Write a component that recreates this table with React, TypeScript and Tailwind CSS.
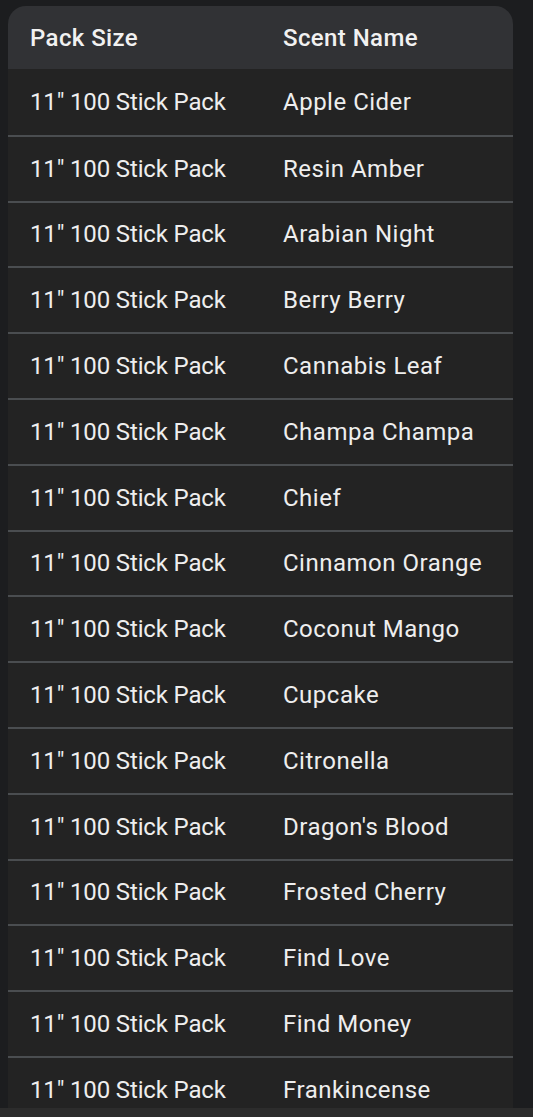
import React from "react";

const scents = [
  "Apple Cider",
  "Resin Amber",
  "Arabian Night",
  "Berry Berry",
  "Cannabis Leaf",
  "Champa Champa",
  "Chief",
  "Cinnamon Orange",
  "Coconut Mango",
  "Cupcake",
  "Citronella",
  "Dragon's Blood",
  "Frosted Cherry",
  "Find Love",
  "Find Money",
  "Frankincense",
];

export default function App() {
  return (
    <div
      className="w-[533px] h-[1117px] overflow-hidden bg-[#1c1d1f] flex flex-col"
      style={{ fontFamily: "Roboto, 'Noto Sans', sans-serif" }}
    >
      <div className="flex-1 overflow-hidden pt-[6px] pl-[8px] pr-[20px]">
        <div className="rounded-t-[18px] overflow-hidden">
          <div className="flex h-[63px] items-center pt-[1px] bg-[#313235] text-[#f1f1f1] text-[24px] font-medium tracking-[0.4px]">
            <div className="w-[275px] pl-[22px]">Pack Size</div>
            <div>Scent Name</div>
          </div>
          {scents.map((s, i) => (
            <div
              key={s}
              className={`flex h-[65.8px] items-center bg-[#232323] text-[#eeeeee] text-[24px] ${
                i > 0 ? "border-t-2 border-[#4a4d50]" : ""
              }`}
            >
              <div className="w-[275px] pl-[22px] tracking-[-0.15px]">11" 100 Stick Pack</div>
              <div className="tracking-[0.5px]">{s}</div>
            </div>
          ))}
        </div>
      </div>
      <div className="h-[9px] bg-[#2c2c2c] shrink-0" />
    </div>
  );
}
